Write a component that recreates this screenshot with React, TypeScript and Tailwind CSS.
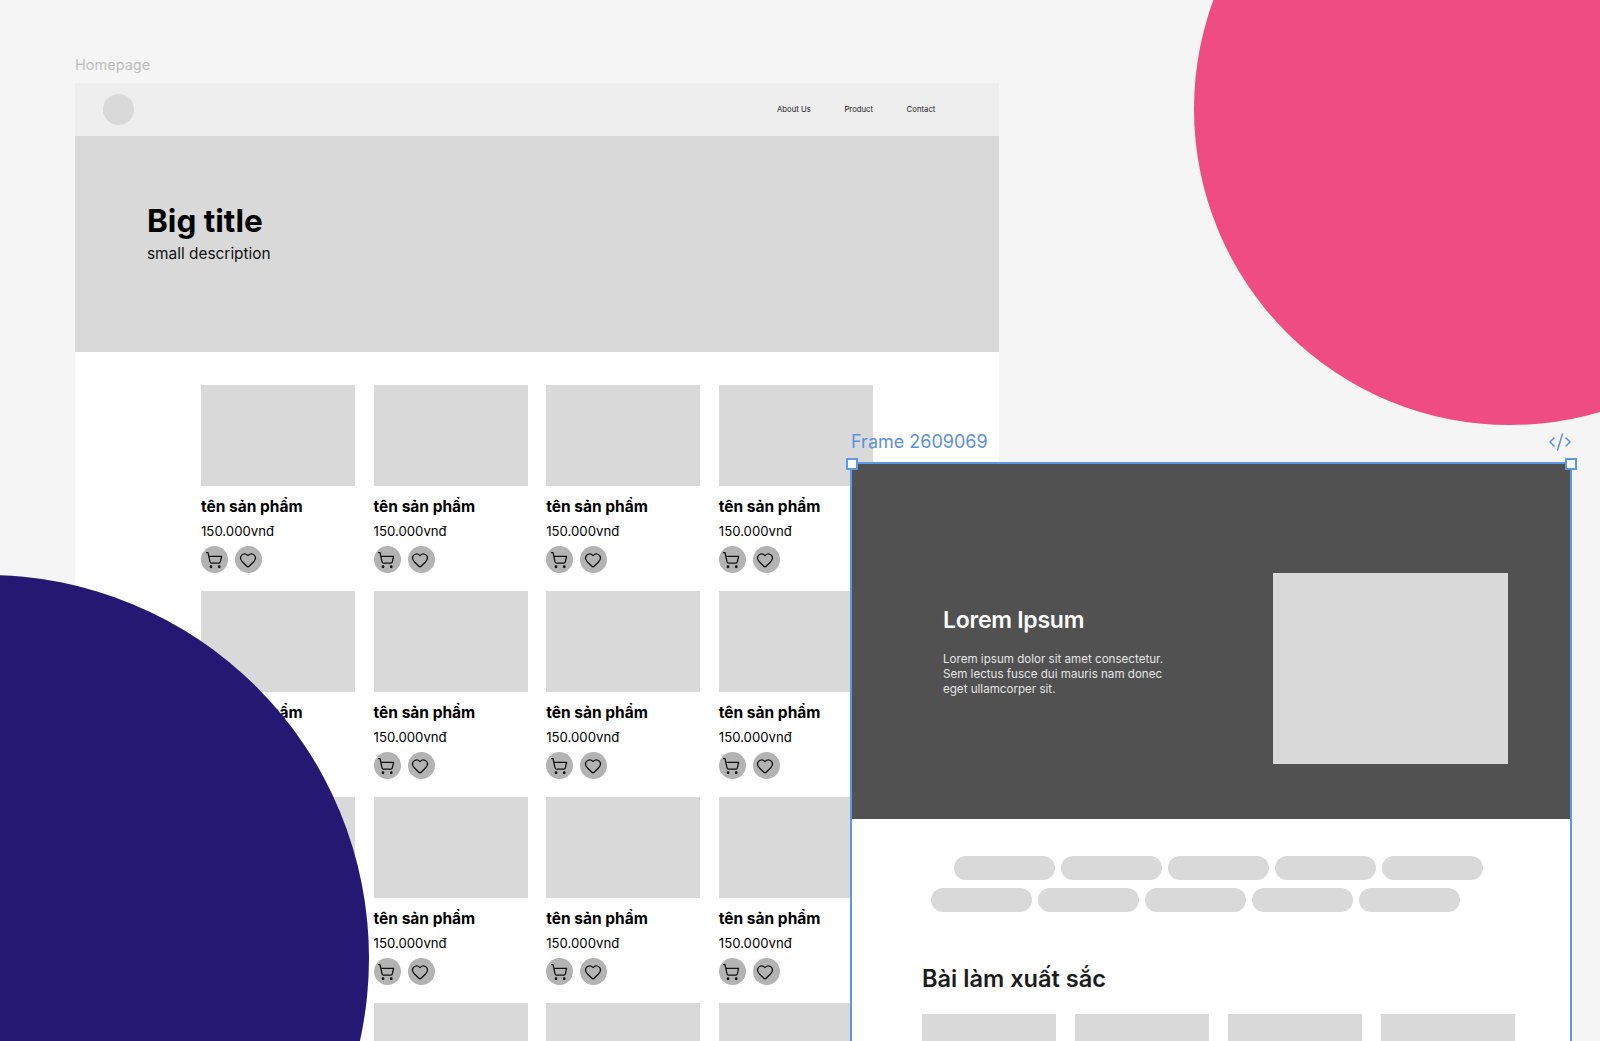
import type { FC } from "react";
import { CodeXml, Heart, ShoppingCart } from "lucide-react";

const navLinks = ["About Us", "Product", "Contact"];
const products = Array.from({ length: 16 }, (_, i) => i);
const pillRows = [
  { id: "top", offset: "pl-[102px]" },
  { id: "bottom", offset: "pl-[79px]" },
];

// the fourth row runs off the bottom of the page, only its pictures show
const ProductCard: FC<{ imageOnly: boolean }> = ({ imageOnly }) => (
  <article className="h-[206px]">
    <div className="h-[101px] bg-[#d9d9d9]" />
    {!imageOnly && (
      <>
        <h3 className="mt-[11px] text-[15.5px] leading-[20px] font-bold text-black">
          tên sản phẩm
        </h3>
        <p className="mt-[5px] text-[13.2px] leading-[18px] text-black">
          150.000vnđ
        </p>
        <div className="mt-[6px] flex gap-[7px]">
          <span className="flex h-[27px] w-[27px] items-center justify-center rounded-full bg-[#b3b3b3] pr-[2px]">
            <ShoppingCart size={18} strokeWidth={1.7} className="text-[#111111]" />
          </span>
          <span className="flex h-[27px] w-[27px] items-center justify-center rounded-full bg-[#b3b3b3] pr-[2px]">
            <Heart size={18} strokeWidth={1.7} className="text-[#111111]" />
          </span>
        </div>
      </>
    )}
  </article>
);

const HomepageFrame: FC = () => (
  <div className="w-[924px] pl-[75px] box-content pt-[56px] font-['Inter',sans-serif]">
    <p className="h-[27px] text-[14.5px] leading-[18px] text-[#bdbdbd]">
      Homepage
    </p>
    <div className="bg-white">
      <nav className="flex h-[53px] items-center bg-[#eeeeee] pl-[28px]">
        <span className="h-[31px] w-[31px] rounded-full bg-[#d9d9d9]" />
        <div className="ml-[643px] flex gap-[33.5px] pt-[1px] text-[7.75px] text-[#222222]">
          {navLinks.map((link) => (
            <a key={link}>{link}</a>
          ))}
        </div>
      </nav>
      <header className="h-[216px] bg-[#d9d9d9] pl-[72px] pt-[66px]">
        <h1 className="text-[31.5px] leading-[38px] font-bold text-black">
          Big title
        </h1>
        <p className="mt-[4px] text-[15.4px] leading-[20px] text-[#111111]">
          small description
        </p>
      </header>
      <section className="grid grid-cols-[repeat(4,154px)] gap-x-[18.6px] pl-[126px] pt-[33px]">
        {products.map((id) => (
          <ProductCard key={id} imageOnly={id >= 12} />
        ))}
      </section>
    </div>
  </div>
);

const SelectedFrame: FC = () => (
  <div className="absolute top-[462px] left-[850px] w-[722px]">
    <span className="absolute -top-[31px] left-[1px] text-[18px] leading-[22px] whitespace-nowrap text-[#5b90dd] font-['Inter',sans-serif]">
      Frame 2609069
    </span>
    <CodeXml
      size={24}
      strokeWidth={1.5}
      className="absolute -top-[32px] right-0 text-[#5b90dd]"
    />
    <div className="h-[579px] overflow-hidden border-x-2 border-t-2 border-[#5b98e8] bg-white font-['Inter',sans-serif]">
      <div className="flex h-[355px] items-start justify-between bg-[#515151] pt-[109px] pr-[62px] pl-[91px]">
        <div className="w-[226px] pt-[32px] text-white">
          <h2 className="text-[23px] leading-[30px] font-semibold tracking-[-0.25px]">
            Lorem Ipsum
          </h2>
          <p className="mt-[17px] text-[11.6px] leading-[15px] text-[#e4e4e4]">
            Lorem ipsum dolor sit amet consectetur. Sem lectus fusce dui mauris
            nam donec eget ullamcorper sit.
          </p>
        </div>
        <div className="h-[191px] w-[235px] bg-[#d9d9d9]" />
      </div>
      <div className="flex flex-col gap-[8px] pt-[37px]">
        {pillRows.map((row) => (
          <div key={row.id} className={`flex gap-[6px] ${row.offset}`}>
            {[0, 1, 2, 3, 4].map((pill) => (
              <span
                key={pill}
                className="h-[24px] w-[101px] rounded-full bg-[#d9d9d9]"
              />
            ))}
          </div>
        ))}
      </div>
      <h2 className="mt-[52px] pl-[70px] text-[23.6px] leading-[30px] font-semibold text-[#1c1c1c]">
        Bài làm xuất sắc
      </h2>
      <div className="mt-[20px] flex gap-[19px] pl-[70px]">
        {[0, 1, 2, 3].map((thumb) => (
          <div key={thumb} className="h-[40px] w-[134px] bg-[#d9d9d9]" />
        ))}
      </div>
    </div>
    <span className="absolute -top-[4px] -left-[4.5px] h-[12px] w-[12px] border-2 border-[#5b98e8] bg-white" />
    <span className="absolute -top-[4px] -right-[5px] h-[12px] w-[12px] border-2 border-[#5b98e8] bg-white" />
  </div>
);

export default function App() {
  return (
    <main className="relative h-[1041px] w-[1600px] overflow-hidden bg-[#f5f5f5]">
      <HomepageFrame />
      <div className="absolute top-[-207px] left-[1194px] h-[632px] w-[632px] rounded-full bg-[#f04c84]" />
      <div className="absolute top-[575px] left-[-397px] h-[766px] w-[766px] rounded-full bg-[#241873]" />
      <SelectedFrame />
    </main>
  );
}
